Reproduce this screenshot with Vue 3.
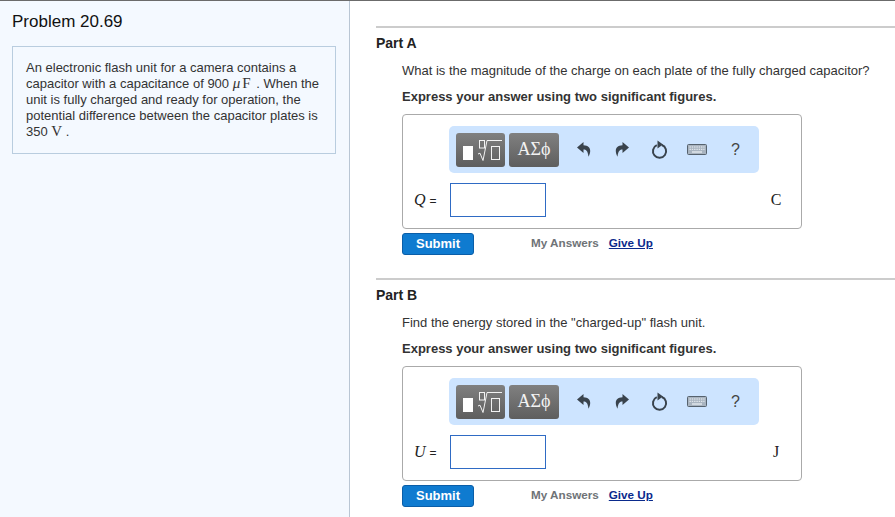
<script setup>
const parts = [
  { id: 'A', q: 'What is the magnitude of the charge on each plate of the fully charged capacitor?', v: 'Q', unit: 'C' },
  { id: 'B', q: 'Find the energy stored in the "charged-up" flash unit.', v: 'U', unit: 'J' }
]
</script>

<template>
  <div class="page">
    <aside class="side">
      <h1 class="title">Problem 20.69</h1>
      <div class="intro">
        An electronic flash unit for a camera contains a capacitor with a capacitance of 900 <span class="m mu"><i>μ</i>F</span> . When the unit is fully charged and ready for operation, the potential difference between the capacitor plates is 350 <span class="m">V</span> .
      </div>
    </aside>
    <main class="main">
      <section v-for="p in parts" :key="p.id" class="part">
        <h2 class="part-title">Part {{ p.id }}</h2>
        <div class="body">
          <p class="q">{{ p.q }}</p>
          <p class="express">Express your answer using two significant figures.</p>
          <div class="box">
            <div class="toolbar">
              <div class="tbtn t1">
                <svg width="49" height="34" viewBox="0 0 49 34">
                  <rect x="7" y="13" width="10" height="14" fill="#fff"/>
                  <rect x="23.5" y="7.5" width="5" height="7.5" fill="none" stroke="#f2f2f2"/>
                  <path d="M22 21l2-.8 3 7.3 4-20h15" fill="none" stroke="#f2f2f2"/>
                  <rect x="35.5" y="13.5" width="8" height="13" fill="none" stroke="#f2f2f2"/>
                </svg>
              </div>
              <div class="tbtn t2">ΑΣϕ</div>
              <svg class="ic i1" width="14" height="15" viewBox="0 0 14 15"><path d="M6.5 0 0 5.6l6.5 5.4V7.6c2.6 0 4.4 1.4 5 7.2C14.6 9.2 13.8 3.4 6.5 3.3z" fill="#39434d"/></svg>
              <svg class="ic i2" width="14" height="15" viewBox="0 0 14 15"><path d="M7.5 0 14 5.6 7.5 11V7.6c-2.6 0-4.4 1.4-5 7.2C-.6 9.2.2 3.4 7.5 3.3z" fill="#39434d"/></svg>
              <svg class="ic i3" width="17" height="19" viewBox="0 0 17 19"><path d="M10.8 5a6.6 6.6 0 1 1-5 .2" fill="none" stroke="#39434d" stroke-width="2"/><path d="M6.5.5 12 4.6 6.5 8.6z" fill="#39434d"/></svg>
              <svg class="ic i4" width="20" height="11" viewBox="0 0 20 11"><rect x=".5" y=".5" width="19" height="10" rx="1" fill="#a9b4c0" stroke="#56626e"/><path d="M2.5 3h15M2.5 5.3h15" stroke="#eef2f6" stroke-dasharray="1.4 .9"/><path d="M5 8h10" stroke="#eef2f6" stroke-width="1.2"/></svg>
              <span class="help">?</span>
            </div>
            <div class="row">
              <span class="var"><i>{{ p.v }}</i> <span class="eq">=</span></span>
              <div class="input"></div>
              <span class="unit">{{ p.unit }}</span>
            </div>
          </div>
          <div class="actions">
            <button class="submit" type="button">Submit</button>
            <span class="my">My Answers</span>
            <a class="give" href="#">Give Up</a>
          </div>
        </div>
      </section>
    </main>
  </div>
</template>

<style scoped>
.page {
  display: flex;
  width: 895px;
  height: 517px;
  overflow: hidden;
  border-top: 1px solid #6b6b6b;
  box-sizing: border-box;
  font-family: "Liberation Sans", Arial, sans-serif;
  color: #222;
  background: #fff;
}
.side {
  width: 350px;
  flex: none;
  box-sizing: border-box;
  background: #f4f9ff;
  border-right: 1px solid #b9c6d4;
  padding: 12px 13px 0 12px;
}
.title {
  margin: 0;
  font-size: 17px;
  line-height: 18px;
  font-weight: 400;
  color: #111;
}
.intro {
  margin-top: 15px;
  width: 324px;
  box-sizing: border-box;
  border: 1px solid #b9cddf;
  padding: 13px 13px 13px 13px;
  font-size: 13px;
  line-height: 16px;
  color: #333;
}
.m {
  display: inline-block;
  height: 14px;
  line-height: 14px;
  font-family: "Liberation Serif", serif;
  font-size: 15px;
}
.mu { letter-spacing: 2px; }
.main { flex: 1; padding-left: 26px; min-width: 0; }
.part { height: 252px; box-sizing: border-box; padding-top: 25px; }
.part-title {
  margin: 0;
  border-top: 2px solid #ccc;
  padding-top: 7px;
  font-size: 14px;
  line-height: 16px;
  font-weight: 700;
  color: #222;
}
.body { padding-left: 26px; }
.q { margin: 12px 0 0; font-size: 13px; line-height: 16px; color: #333; }
.express { margin: 10px 0 0; font-size: 13px; line-height: 16px; font-weight: 700; color: #333; }
.box {
  margin-top: 9px;
  width: 400px;
  height: 115px;
  box-sizing: border-box;
  border: 1px solid #aaa;
  border-radius: 4px;
  position: relative;
  padding-top: 11px;
}
.toolbar {
  margin-left: 46px;
  width: 310px;
  height: 47px;
  box-sizing: border-box;
  border-radius: 5px;
  background: #cde4ff;
  display: flex;
  align-items: center;
  padding-left: 7px;
}
.tbtn {
  height: 34px;
  border-radius: 3px;
  background: linear-gradient(#808080, #5e5e5e);
  color: #f2f2f2;
  display: flex;
  align-items: center;
  justify-content: center;
  box-sizing: border-box;
}
.t1 { width: 49px; }
.t2 {
  width: 50px;
  margin-left: 4px;
  font-family: "Liberation Serif", serif;
  font-size: 18px;
}
.ic { flex: none; }
.i1 { margin-left: 18px; }
.i2 { margin-left: 24px; }
.i3 { margin-left: 22px; }
.i4 { margin-left: 19px; }
.help { margin-left: 24px; font-size: 16px; color: #444; }
.row {
  display: flex;
  align-items: center;
  margin-top: 10px;
  height: 34px;
}
.var {
  width: 47px;
  box-sizing: border-box;
  padding-left: 11px;
  font-family: "Liberation Serif", serif;
  font-size: 16px;
  color: #222;
}
.eq { font-family: "Liberation Sans", sans-serif; font-size: 12px; }
.input {
  width: 96px;
  height: 34px;
  box-sizing: border-box;
  border: 1px solid #2f6bc4;
  background: #fff;
}
.unit {
  margin-left: auto;
  margin-right: 15px;
  margin-top: -1px;
  width: 20px;
  text-align: center;
  font-family: "Liberation Serif", serif;
  font-size: 16px;
  color: #222;
}
.actions {
  display: flex;
  align-items: center;
  margin-top: 4px;
  height: 22px;
  font-size: 11.7px;
  line-height: 20px;
  font-weight: 700;
}
.submit {
  width: 72px;
  height: 22px;
  padding: 0 0 2px;
  border: 1px solid #0a5ea8;
  border-radius: 3px;
  background: #0f7bd0;
  color: #fff;
  font: 700 13px "Liberation Sans", sans-serif;
}
.my { margin-left: 57px; color: #6f7377; margin-bottom: 2px; }
.give { margin-left: 10px; color: #0a2a8c; text-decoration: underline; margin-bottom: 2px; }
</style>

<style>
html, body { margin: 0; padding: 0; background: #fff; }
</style>
